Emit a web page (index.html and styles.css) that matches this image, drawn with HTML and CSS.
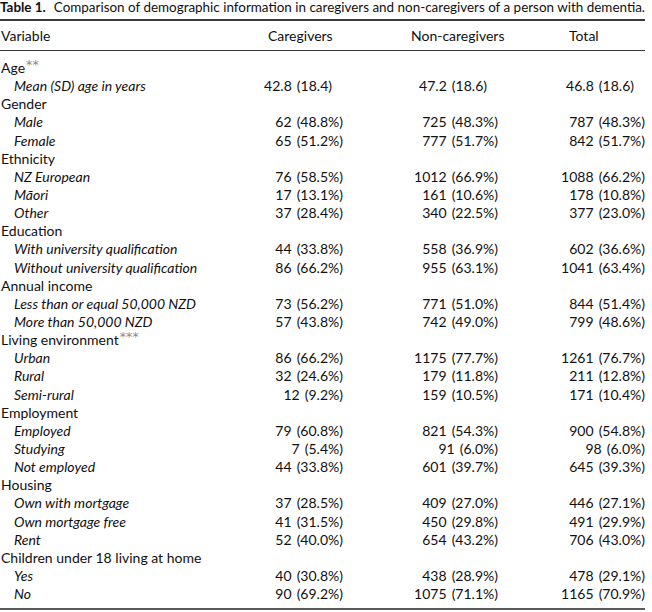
FILE: index.html
```html
<!DOCTYPE html>
<html lang="en">
<head>
<meta charset="utf-8">
<title>Table 1</title>
<link rel="stylesheet" href="styles.css">
</head>
<body>
<div class="page">
  <p class="caption"><b class="caption-label">Table 1.</b><span class="caption-text">Comparison of demographic information in caregivers and non-caregivers of a person with dementia.</span></p>
  <table class="data">
    <colgroup>
      <col class="col-var">
      <col class="col-cg">
      <col class="col-ncg">
      <col class="col-tot">
    </colgroup>
    <thead>
      <tr>
        <th class="h-var">Variable</th>
        <th class="h-cg">Caregivers</th>
        <th class="h-ncg">Non-caregivers</th>
        <th class="h-tot">Total</th>
      </tr>
    </thead>
    <tbody>
      <tr class="group"><td>Age<span class="ast">**</span></td><td></td><td></td><td></td></tr>
      <tr class="item mean"><td>Mean (SD) age in years</td><td>42.8 (18.4)</td><td>47.2 (18.6)</td><td>46.8 (18.6)</td></tr>
      <tr class="group"><td>Gender</td><td></td><td></td><td></td></tr>
      <tr class="item"><td>Male</td><td>62 (48.8%)</td><td>725 (48.3%)</td><td>787 (48.3%)</td></tr>
      <tr class="item"><td>Female</td><td>65 (51.2%)</td><td>777 (51.7%)</td><td>842 (51.7%)</td></tr>
      <tr class="group"><td>Ethnicity</td><td></td><td></td><td></td></tr>
      <tr class="item"><td>NZ European</td><td>76 (58.5%)</td><td>1012 (66.9%)</td><td>1088 (66.2%)</td></tr>
      <tr class="item"><td>Māori</td><td>17 (13.1%)</td><td>161 (10.6%)</td><td>178 (10.8%)</td></tr>
      <tr class="item"><td>Other</td><td>37 (28.4%)</td><td>340 (22.5%)</td><td>377 (23.0%)</td></tr>
      <tr class="group"><td>Education</td><td></td><td></td><td></td></tr>
      <tr class="item"><td>With university qualification</td><td>44 (33.8%)</td><td>558 (36.9%)</td><td>602 (36.6%)</td></tr>
      <tr class="item"><td>Without university qualification</td><td>86 (66.2%)</td><td>955 (63.1%)</td><td>1041 (63.4%)</td></tr>
      <tr class="group"><td>Annual income</td><td></td><td></td><td></td></tr>
      <tr class="item"><td>Less than or equal 50,000 NZD</td><td>73 (56.2%)</td><td>771 (51.0%)</td><td>844 (51.4%)</td></tr>
      <tr class="item"><td>More than 50,000 NZD</td><td>57 (43.8%)</td><td>742 (49.0%)</td><td>799 (48.6%)</td></tr>
      <tr class="group"><td>Living environment<span class="ast">***</span></td><td></td><td></td><td></td></tr>
      <tr class="item"><td>Urban</td><td>86 (66.2%)</td><td>1175 (77.7%)</td><td>1261 (76.7%)</td></tr>
      <tr class="item"><td>Rural</td><td>32 (24.6%)</td><td>179 (11.8%)</td><td>211 (12.8%)</td></tr>
      <tr class="item"><td>Semi-rural</td><td>12 (9.2%)</td><td>159 (10.5%)</td><td>171 (10.4%)</td></tr>
      <tr class="group"><td>Employment</td><td></td><td></td><td></td></tr>
      <tr class="item"><td>Employed</td><td>79 (60.8%)</td><td>821 (54.3%)</td><td>900 (54.8%)</td></tr>
      <tr class="item"><td>Studying</td><td>7 (5.4%)</td><td>91 (6.0%)</td><td>98 (6.0%)</td></tr>
      <tr class="item"><td>Not employed</td><td>44 (33.8%)</td><td>601 (39.7%)</td><td>645 (39.3%)</td></tr>
      <tr class="group"><td>Housing</td><td></td><td></td><td></td></tr>
      <tr class="item"><td>Own with mortgage</td><td>37 (28.5%)</td><td>409 (27.0%)</td><td>446 (27.1%)</td></tr>
      <tr class="item"><td>Own mortgage free</td><td>41 (31.5%)</td><td>450 (29.8%)</td><td>491 (29.9%)</td></tr>
      <tr class="item"><td>Rent</td><td>52 (40.0%)</td><td>654 (43.2%)</td><td>706 (43.0%)</td></tr>
      <tr class="group"><td>Children under 18 living at home</td><td></td><td></td><td></td></tr>
      <tr class="item"><td>Yes</td><td>40 (30.8%)</td><td>438 (28.9%)</td><td>478 (29.1%)</td></tr>
      <tr class="item"><td>No</td><td>90 (69.2%)</td><td>1075 (71.1%)</td><td>1165 (70.9%)</td></tr>
    </tbody>
  </table>
</div>
</body>
</html>
```

FILE: styles.css
```css
html, body {
  margin: 0;
  padding: 0;
  background: #ffffff;
}

body {
  font-family: Lato, "Open Sans", "DejaVu Sans", sans-serif;
  color: #111011;
}

.page {
  width: 652px;
}

.caption {
  margin: 0;
  padding: 0;
  height: 19px;
  font-size: 13.45px;
  line-height: 14px;
  white-space: nowrap;
}

.caption-label {
  font-weight: 700;
  margin-right: 8px;
}

.data {
  width: 645px;
  table-layout: fixed;
  border-collapse: collapse;
  border-top: 2px solid #3a3a3a;
  border-bottom: 2px solid #5a5a5a;
  font-size: 14px;
  font-variant-numeric: tabular-nums;
}

.col-var { width: 260px; }
.col-cg { width: 83px; }
.col-ncg { width: 155px; }
.col-tot { width: 147px; }

.data thead th {
  font-weight: 400;
  text-align: left;
  height: 29px;
  padding: 0;
  border-bottom: 1.5px solid #3a3a3a;
  vertical-align: middle;
  white-space: nowrap;
  overflow: visible;
}

.data thead th.h-var { padding-left: 1px; }
.data thead th.h-cg { padding-left: 8px; }
.data thead th.h-ncg { padding-left: 68px; }
.data thead th.h-tot { padding-left: 71px; }

.data tbody td {
  padding: 0;
  height: 18.14px;
  line-height: 18.14px;
  white-space: nowrap;
  text-align: right;
  word-spacing: 1.5px;
}

.data tbody td:first-child {
  text-align: left;
  padding-left: 1px;
  word-spacing: 0;
}

.data tbody tr.item td:first-child {
  font-style: italic;
  padding-left: 14px;
}

.data tbody tr.mean td + td {
  padding-right: 11px;
}

.data tbody tr:first-child td {
  padding-top: 8px;
}

.data tbody tr:last-child td {
  padding-bottom: 5px;
}

.ast {
  display: inline-block;
  font-family: "DejaVu Sans", sans-serif;
  color: #8a8a8a;
  font-size: 12.5px;
  line-height: 10px;
  vertical-align: 4px;
  margin-left: 1px;
  letter-spacing: 0.2px;
}
```
